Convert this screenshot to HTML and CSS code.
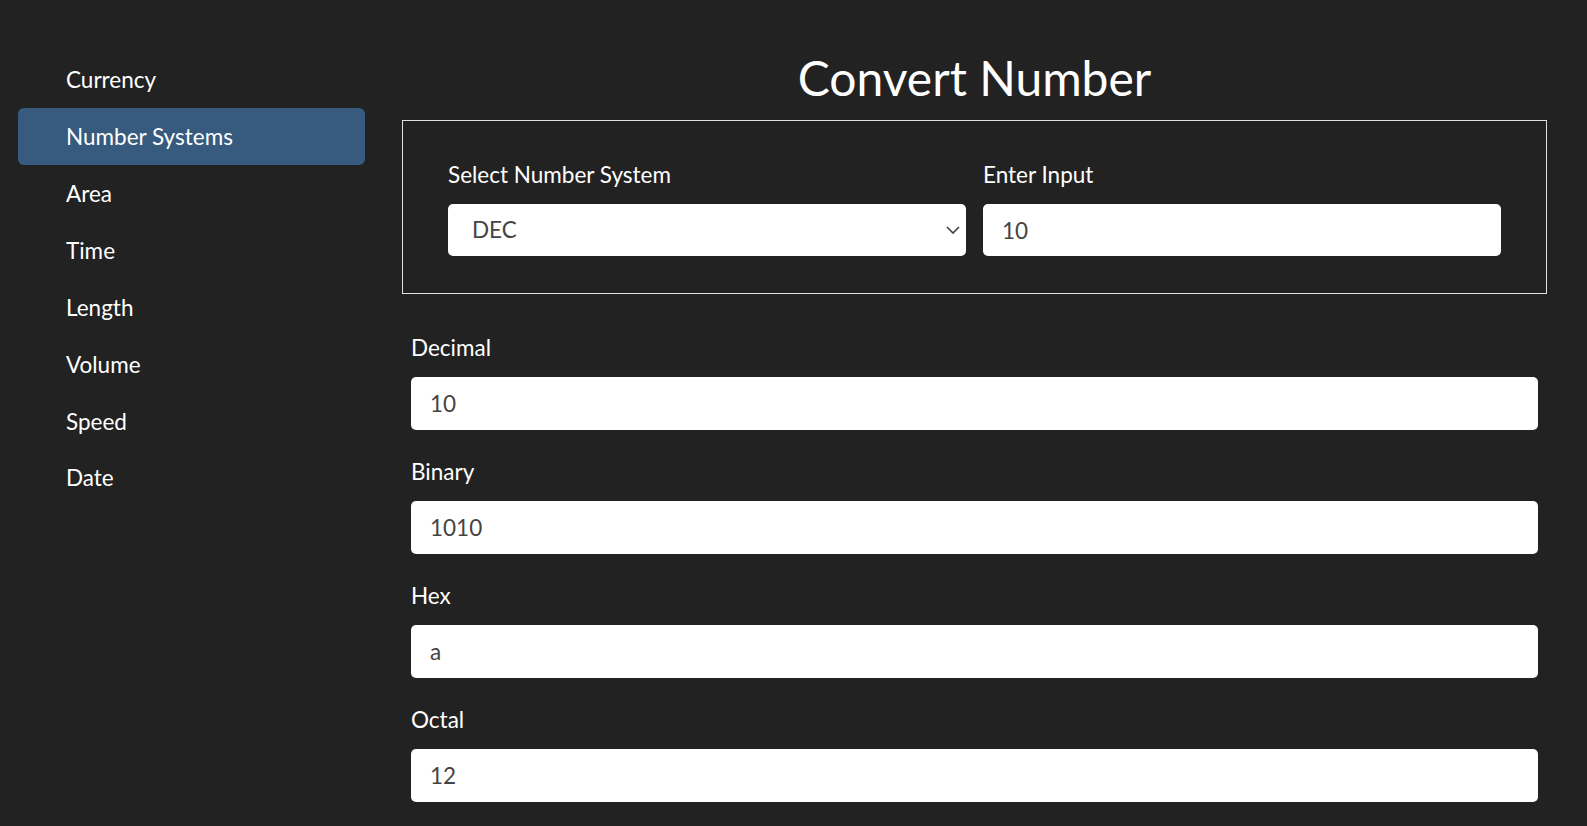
FILE: index.html
```html
<!DOCTYPE html>
<html lang="en">
<head>
<meta charset="utf-8">
<title>Convert Number</title>
<link rel="stylesheet" href="styles.css">
</head>
<body>
<div class="page">
  <nav class="sidebar">
    <a class="nav-link" href="#">Currency</a>
    <a class="nav-link active" href="#">Number Systems</a>
    <a class="nav-link" href="#">Area</a>
    <a class="nav-link" href="#">Time</a>
    <a class="nav-link" href="#">Length</a>
    <a class="nav-link" href="#">Volume</a>
    <a class="nav-link" href="#">Speed</a>
    <a class="nav-link" href="#">Date</a>
  </nav>
  <main class="main">
    <h1 class="title">Convert Number</h1>
    <section class="card">
      <div class="field">
        <label class="label" for="sys">Select Number System</label>
        <div class="select-wrap">
          <select id="sys" class="control select">
            <option>DEC</option>
            <option>BIN</option>
            <option>HEX</option>
            <option>OCT</option>
          </select>
          <svg class="chevron" width="14" height="8" viewBox="0 0 14 8" aria-hidden="true"><path d="M1 1 L7 7 L13 1" fill="none" stroke="#444" stroke-width="1.7"/></svg>
        </div>
      </div>
      <div class="field">
        <label class="label" for="inp">Enter Input</label>
        <input id="inp" class="control" type="text" value="10">
      </div>
    </section>
    <section class="results">
      <div class="result">
        <label class="label">Decimal</label>
        <input class="control result-input" type="text" value="10">
      </div>
      <div class="result">
        <label class="label">Binary</label>
        <input class="control result-input" type="text" value="1010">
      </div>
      <div class="result">
        <label class="label">Hex</label>
        <input class="control result-input" type="text" value="a">
      </div>
      <div class="result">
        <label class="label">Octal</label>
        <input class="control result-input" type="text" value="12">
      </div>
    </section>
  </main>
</div>
</body>
</html>
```

FILE: styles.css
```css
* {
  box-sizing: border-box;
}

html, body {
  margin: 0;
  padding: 0;
  background: #222222;
  color: #ffffff;
  font-family: Lato, "Liberation Sans", sans-serif;
}

.page {
  display: flex;
  gap: 37px;
  padding: 51px 40px 0 18px;
  min-height: 826px;
}

.sidebar {
  width: 347px;
  flex: none;
  display: flex;
  flex-direction: column;
}

.nav-link {
  display: block;
  padding: 11.6px 16px 11.65px 48px;
  font-size: 22.5px;
  line-height: 33.75px;
  color: #ffffff;
  text-decoration: none;
  border-radius: 6px;
}

.nav-link.active {
  background: #375a7f;
}

.main {
  flex: 1;
  min-width: 0;
}

.title {
  margin: 0 0 15px;
  font-size: 48px;
  font-weight: 400;
  line-height: 54px;
  text-align: center;
}

.card {
  border: 1px solid #dee2e6;
  padding: 36.5px 45px 37px;
  display: flex;
  gap: 17px;
}

.field {
  flex: 1;
  min-width: 0;
  display: flex;
  flex-direction: column;
}

.label {
  display: block;
  font-size: 22.5px;
  line-height: 33.75px;
  margin-bottom: 13px;
  color: #ffffff;
}

.control {
  display: block;
  width: 100%;
  height: 52px;
  border: 0;
  border-radius: 5px;
  background: #ffffff;
  color: #444444;
  font-family: Lato, "Liberation Sans", sans-serif;
  font-size: 22.5px;
  line-height: 33.75px;
  padding: 9px 19px 9.25px;
  margin: 0;
  outline: none;
}

.select-wrap {
  position: relative;
}

.select {
  appearance: none;
  -webkit-appearance: none;
  padding-left: 24px;
  padding-right: 30px;
}

.chevron {
  position: absolute;
  right: 6px;
  top: 22px;
  pointer-events: none;
}

.results {
  margin: 36.5px 9px 0;
}

.result {
  margin-bottom: 25px;
}

.result .label {
  margin-bottom: 12.25px;
}

.result-input {
  height: 53px;
  padding-top: 10px;
  padding-bottom: 9.25px;
}
```
